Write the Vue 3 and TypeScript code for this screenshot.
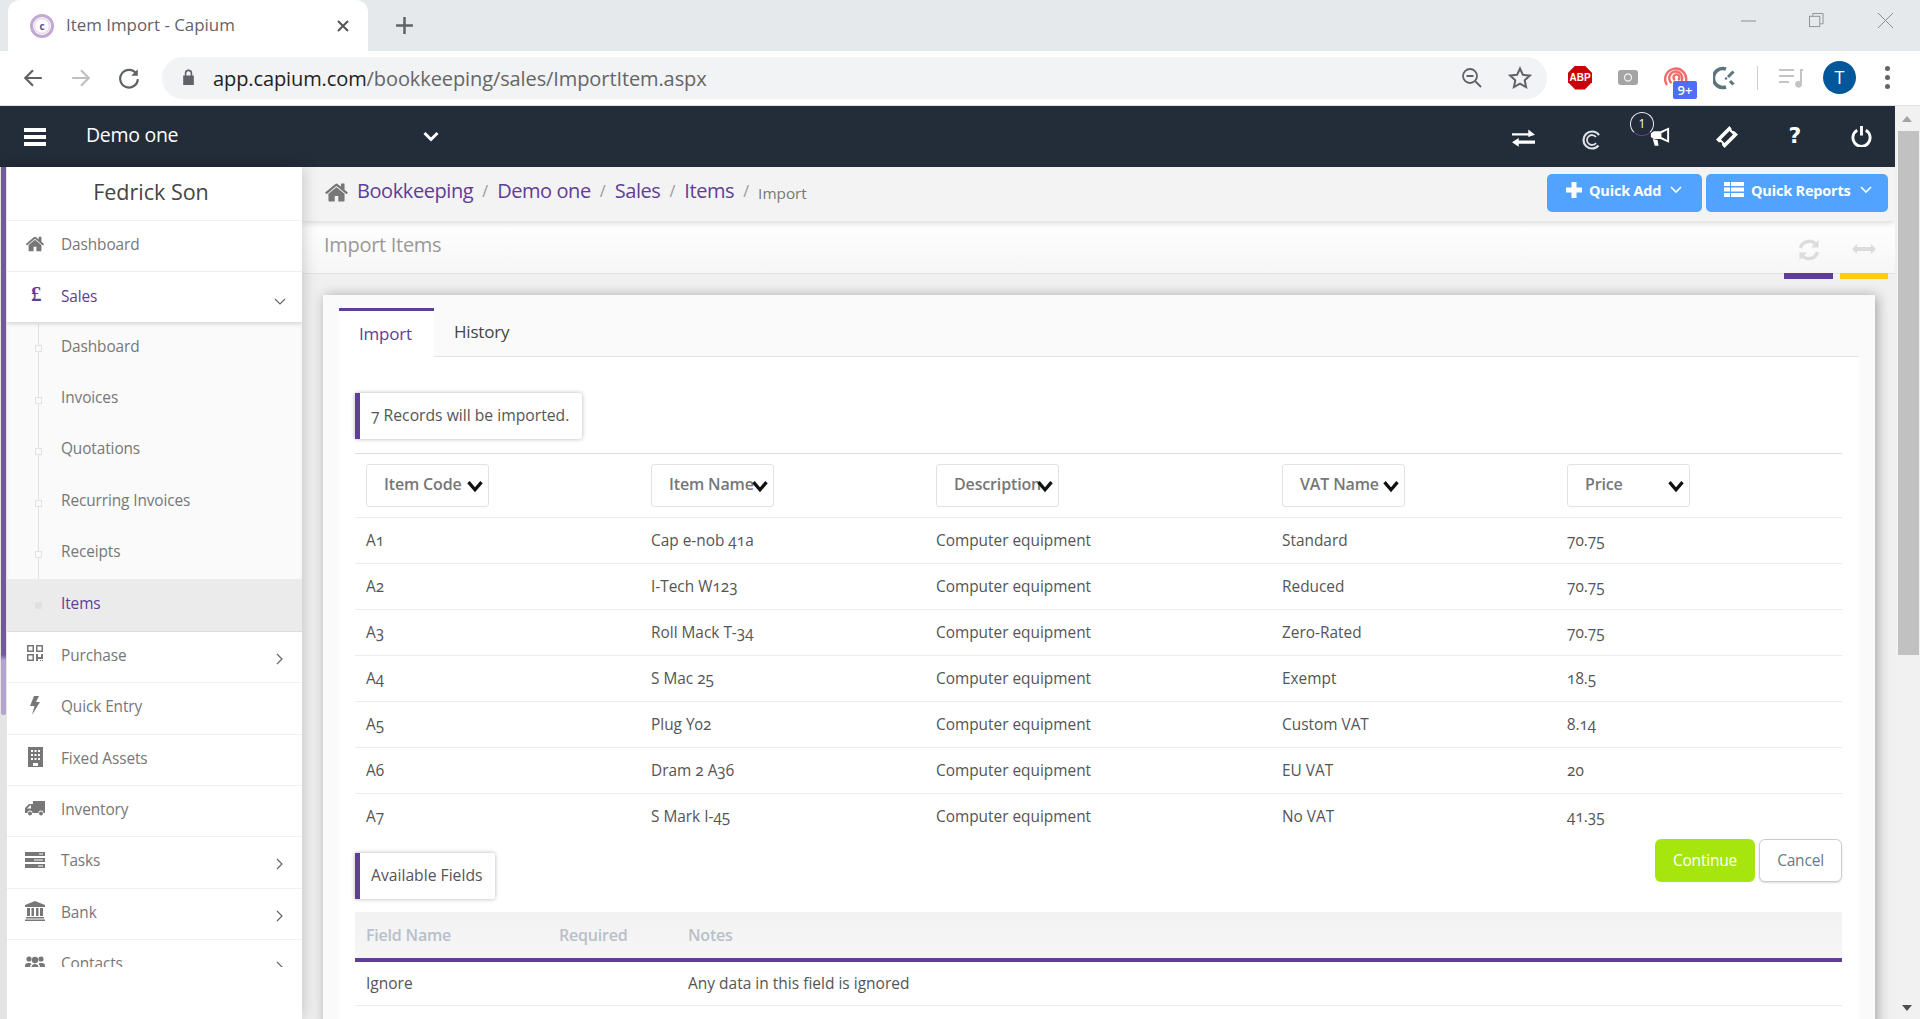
<script setup lang="ts">
interface NavItem { label: string; icon: string; arrow?: boolean }
const topItems: NavItem[] = [
  { label: 'Purchase', icon: 'qr', arrow: true },
  { label: 'Quick Entry', icon: 'bolt' },
  { label: 'Fixed Assets', icon: 'building' },
  { label: 'Inventory', icon: 'truck' },
  { label: 'Tasks', icon: 'tasks', arrow: true },
  { label: 'Bank', icon: 'bank', arrow: true },
  { label: 'Contacts', icon: 'users', arrow: true }
]
const subItems = ['Dashboard', 'Invoices', 'Quotations', 'Recurring Invoices', 'Receipts']
const crumbs = ['Bookkeeping', 'Demo one', 'Sales', 'Items']
const columns = ['Item Code', 'Item Name', 'Description', 'VAT Name', 'Price']
const rows = [
  ['A1', 'Cap e-nob 41a', 'Computer equipment', 'Standard', '70.75'],
  ['A2', 'I-Tech W123', 'Computer equipment', 'Reduced', '70.75'],
  ['A3', 'Roll Mack T-34', 'Computer equipment', 'Zero-Rated', '70.75'],
  ['A4', 'S Mac 25', 'Computer equipment', 'Exempt', '18.5'],
  ['A5', 'Plug Y02', 'Computer equipment', 'Custom VAT', '8.14'],
  ['A6', 'Dram 2 A36', 'Computer equipment', 'EU VAT', '20'],
  ['A7', 'S Mark I-45', 'Computer equipment', 'No VAT', '41.35']
]
const homePath = 'M1472 992v480q0 26-19 45t-45 19h-384v-384h-256v384h-384q-26 0-45-19t-19-45v-480q0-1 .5-3t.5-3l575-474 575 474q1 2 1 6zm223-69l-62 74q-8 9-21 11h-3q-13 0-21-7l-692-577-692 577q-12 8-24 7-13-2-21-11l-62-74q-8-10-7-23.500t11-21.500l719-599q32-26 76-26t76 26l244 204v-195q0-14 9-23t23-9h192q14 0 23 9t9 23v408l219 182q10 8 11 21.500t-7 23.500z'
</script>

<template>
  <div class="page">
    <div class="tabstrip">
      <div class="tab">
        <svg class="favicon" viewBox="0 0 24 24" fill="none">
          <circle cx="12" cy="12" r="10.500" stroke="#c3a8d3" stroke-width="3" />
          <circle cx="12" cy="12" r="7.500" stroke="#e6dcec" stroke-width="1.500" />
          <text x="12" y="15.500" text-anchor="middle" font-size="10" font-weight="700" fill="#6a4a90" font-family="Open Sans">c</text>
        </svg>
        <span class="tab-title">Item Import - Capium</span>
        <svg class="tab-x" viewBox="0 0 14 14"><path d="M2 2l10 10M12 2L2 12" stroke="#555" stroke-width="2" /></svg>
      </div>
      <svg class="tab-plus" viewBox="0 0 18 18"><path d="M9 1v16M1 9h16" stroke="#5f6368" stroke-width="2.400" /></svg>
      <div class="win">
        <svg class="win-min" viewBox="0 0 15 2"><path d="M0 1h15" stroke="#8a8f94" /></svg>
        <svg class="win-res" viewBox="0 0 16 16" fill="none" stroke="#8a8f94"><rect x=".5" y="3.500" width="11" height="11" /><path d="M4 3V.5h11v11h-3" /></svg>
        <svg class="win-x" viewBox="0 0 15 15"><path d="M0 0l15 15M15 0L0 15" stroke="#8a8f94" /></svg>
      </div>
    </div>

    <div class="toolbar">
      <svg class="nav-ic first" viewBox="0 0 20 20" fill="none" stroke="#5f6368" stroke-width="2"><path d="M18 10H3M10 3l-7 7 7 7" /></svg>
      <svg class="nav-ic" viewBox="0 0 20 20" fill="none" stroke="#bdc1c6" stroke-width="2"><path d="M2 10h15M10 3l7 7-7 7" /></svg>
      <svg class="nav-ic" viewBox="0 0 20 20" fill="none" stroke="#5f6368" stroke-width="2"><path d="M16.500 6A8 8 0 1 0 18 11" /><path d="M18 2v6h-6" fill="#5f6368" stroke="none" /></svg>
      <div class="omnibox">
        <svg class="lock" viewBox="0 0 12 16"><path d="M1 6h1.500V4a3.500 3.500 0 0 1 7 0v2H11v9H1zM4 6h4V4a2 2 0 0 0-4 0z" fill="#5f6368" /></svg>
        <span class="url"><b>app.capium.com</b>/bookkeeping/sales/ImportItem.aspx</span>
        <svg class="omni-zoom" viewBox="0 0 20 20" fill="none" stroke="#5f6368" stroke-width="1.800"><circle cx="8" cy="8" r="7" /><path d="M4.500 8h7M13 13l6 6" /></svg>
        <svg class="omni-star" viewBox="0 0 24 24" fill="none" stroke="#5f6368" stroke-width="2"><path d="M12 2.500l2.900 6.300 6.900.8-5.100 4.700 1.400 6.800-6.100-3.400-6.100 3.400 1.400-6.800L2.200 9.600l6.900-.8z" /></svg>
      </div>
      <div class="abp"><span>ABP</span></div>
      <svg class="ext-cam" viewBox="0 0 20 15"><rect width="20" height="15" rx="3" fill="#a4a4a4" /><circle cx="10" cy="7.500" r="3.500" fill="none" stroke="#eee" stroke-width="1.300" /></svg>
      <div class="ext-red">
        <svg viewBox="0 0 24 24" fill="none" stroke="#f36a6a" stroke-width="2.400"><path d="M3 19A10.500 10.500 0 1 1 22 15" /><path d="M7.500 17a6.500 6.500 0 1 1 10-2" /><path d="M11 14a3 3 0 1 1 3 0" /></svg>
        <span class="ext-badge">9+</span>
      </div>
      <svg class="ext-clock" viewBox="0 0 22 24" fill="none" stroke="#5c7480" stroke-width="3.600"><path d="M13 3A9.500 9.500 0 1 0 13 21" /><path d="M20.500 5.500L15 11M20.500 18.500L17 15" stroke-width="3" /><circle cx="13" cy="12.500" r="1.300" fill="#5c7480" stroke="none" /></svg>
      <div class="tool-div"></div>
      <svg class="ext-music" viewBox="0 0 24 20"><path d="M0 2h15M0 8h15M0 14h10" stroke="#c4c4c4" stroke-width="2.200" /><path d="M21 1h3v2h-1v13a3.500 3.500 0 1 1-2-3z" fill="#c4c4c4" /></svg>
      <div class="avatar">T</div>
      <div class="dots"><i></i><i></i><i></i></div>
    </div>

    <div class="viewport">
      <div class="app">
        <header class="topbar">
          <div class="burger"><i></i><i></i><i></i></div>
          <span class="company">Demo one</span>
          <svg class="company-chev" viewBox="0 0 16 11" fill="none" stroke="#fff" stroke-width="3"><path d="M1.500 2l6.500 6.500L14.500 2" /></svg>
          <div class="top-icons">
            <svg class="ti-swap" viewBox="0 0 24 18" fill="#fff"><path d="M0 4h17V0l7 5.500L17 8V6.500H0zM24 11.500H7V9L0 13.500 7 18v-3h17z" /></svg>
            <svg class="ti-c" viewBox="0 0 20 20" fill="none" stroke="#dfe3e6"><circle cx="11" cy="10" r="8.500" stroke-width="2.200" stroke-dasharray="42 12" stroke-dashoffset="-6" /><path d="M15 13a5 5 0 1 1 0-6" stroke-width="1.800" /></svg>
            <div class="ti-horn">
              <svg viewBox="0 0 24 20" fill="#fff"><path d="M22 0v16l-9-4H6L3 10V6l3-2h7zM20 3l-6 3v4l6 3zM5 12l5 1 1 6H7z" fill-rule="evenodd" /></svg>
              <span class="ti-count">1</span>
            </div>
            <svg class="ti-ticket" viewBox="0 0 22 22" fill="#fff"><path d="M13.500 0l2 2.500a2 2 0 0 0 2.500 2.500l4 3.500L8.500 22l-2.500-3a2 2 0 0 0-3-2.500L0 13.500zM13.500 5L5 13.500l3.500 3.500 8.500-8.500z" fill-rule="evenodd" /></svg>
            <span class="ti-help">?</span>
            <svg class="ti-power" viewBox="0 0 22 22" fill="none" stroke="#fff" stroke-width="3"><path d="M6.500 4.500a9 9 0 1 0 9 0" /><path d="M11 0v10" /></svg>
          </div>
        </header>

        <div class="body">
          <aside class="sidebar">
            <div class="user">Fedrick Son</div>
            <nav class="menu">
              <div class="item">
                <svg class="ic ic-home" viewBox="0 0 1792 1792"><path :d="homePath" fill="#777" /></svg>
                <span>Dashboard</span>
              </div>
              <div class="item open">
                <span class="pound">£</span>
                <span>Sales</span>
                <svg class="chev chev-down" viewBox="0 0 12 8" fill="none" stroke="#666" stroke-width="1.200"><path d="M1 1l5 5 5-5" /></svg>
              </div>
              <div class="subs">
                <div v-for="s in subItems" :key="s" class="sub"><i class="node"></i><span>{{ s }}</span></div>
                <div class="sub current"><i class="node"></i><span>Items</span></div>
              </div>
              <div v-for="it in topItems" :key="it.label" class="item">
                <svg class="ic" viewBox="0 0 20 20" fill="#777">
                  <template v-if="it.icon === 'qr'">
                    <path fill-rule="evenodd" d="M2 1h7v7H2zM3.500 2.500v4h4v-4zM11 1h7v7h-7zM12.500 2.500v4h4v-4zM2 10h7v7H2zM3.500 11.500v4h4v-4zM11 10h2v3h3v-3h2v5h-5v2h-2zM15 16h1v1h-1zM17 16h1v1h-1z" />
                  </template>
                  <path v-else-if="it.icon === 'bolt'" d="M9 0h5l-3 6h4L7 19l2.500-9H5z" />
                  <template v-else-if="it.icon === 'building'">
                    <path fill-rule="evenodd" d="M3 0h15v20H3zM6 3v2h2V3zM9.500 3v2h2V3zM13 3v2h2V3zM6 7v2h2V7zM9.500 7v2h2V7zM13 7v2h2V7zM6 11v2h2v-2zM9.500 11v2h2v-2zM13 11v2h2v-2zM8 16v3h5v-3z" />
                  </template>
                  <path v-else-if="it.icon === 'truck'" fill-rule="evenodd" d="M8 2h12v12h-1.500a2.500 2.500 0 0 0-5 0H7.500a2.500 2.500 0 0 0-5 0H0V9l4-4h4zM5 6.500L2 9.500h4v-3zM5 12.500a2 2 0 1 1 0 4 2 2 0 0 1 0-4zM16 12.500a2 2 0 1 1 0 4 2 2 0 0 1 0-4z" />
                  <template v-else-if="it.icon === 'tasks'">
                    <path fill-rule="evenodd" d="M0 2h20v4H0zM14 3.500v1h4v-1zM0 8h20v4H0zM9 9.500v1h9v-1zM0 14h20v4H0zM13 15.500v1h5v-1z" />
                  </template>
                  <path v-else-if="it.icon === 'bank'" fill-rule="evenodd" d="M10 0l10 4v2H0V4zM2 7h3v8H2zM6.500 7h2.500v8H6.500zM11 7h2.500v8H11zM15 7h3v8h-3zM1 16h18v1.500H1zM0 18.500h20V20H0z" />
                  <template v-else>
                    <circle cx="4" cy="6" r="2.600" /><circle cx="16" cy="6" r="2.600" /><circle cx="10" cy="7" r="3.200" />
                    <path d="M0 13q0-3 3-3h2q1 0 1.500 1Q5 12 5 14H0zM20 13q0-3-3-3h-2q-1 0-1.500 1 1.500 1 1.500 3h5zM6 17q0-6 4-6t4 6z" />
                  </template>
                </svg>
                <span>{{ it.label }}</span>
                <svg v-if="it.arrow" class="chev chev-right" viewBox="0 0 8 12" fill="none" stroke="#666" stroke-width="1.200"><path d="M1 1l5 5-5 5" /></svg>
              </div>
            </nav>
            <div class="rail"></div>
          </aside>

          <main class="content">
            <div class="crumbbar">
              <svg class="crumb-home" viewBox="0 0 1792 1792"><path :d="homePath" fill="#777" /></svg>
              <template v-for="c in crumbs" :key="c">
                <a class="crumb">{{ c }}</a><span class="slash">/</span>
              </template>
              <span class="crumb-now">Import</span>
              <div class="quick">
                <button class="qbtn q-add">
                  <svg viewBox="0 0 16 16" class="q-plus"><path d="M8 0v16M0 8h16" stroke="#fff" stroke-width="5" /></svg>
                  Quick Add
                  <svg viewBox="0 0 12 8" class="q-chev" fill="none" stroke="#fff" stroke-width="1.600"><path d="M1 1l5 5 5-5" /></svg>
                </button>
                <button class="qbtn q-rep">
                  <svg viewBox="0 0 20 15" class="q-table" fill="#fff"><path d="M0 0h6v4H0zM7 0h13v4H7zM0 5.500h6v4H0zM7 5.500h13v4H7zM0 11h6v4H0zM7 11h13v4H7z" /></svg>
                  Quick Reports
                  <svg viewBox="0 0 12 8" class="q-chev" fill="none" stroke="#fff" stroke-width="1.600"><path d="M1 1l5 5 5-5" /></svg>
                </button>
              </div>
            </div>

            <div class="titlebar">
              <h1>Import Items</h1>
              <div class="tool purple">
                <svg viewBox="0 0 22 22" fill="none" stroke="#dcdcdc" stroke-width="3.400"><path d="M2.500 9a9 9 0 0 1 15.500-3.500M19.500 13a9 9 0 0 1-15.500 3.500" /><path d="M20.500 1v7.500H13M1.500 21v-7.500H9" fill="#dcdcdc" stroke="none" /></svg>
              </div>
              <div class="tool yellow">
                <svg viewBox="0 0 24 10" fill="#dcdcdc"><path d="M0 5l5-5v3h14V0l5 5-5 5V7H5v3z" /></svg>
              </div>
            </div>

            <section class="card">
              <div class="tabs">
                <div class="t active">Import</div>
                <div class="t">History</div>
              </div>
              <div class="panel">
                <div class="callout">7 Records will be imported.</div>
                <table class="grid">
                  <colgroup><col class="c1" /><col class="c1" /><col class="c3" /><col class="c1" /><col /></colgroup>
                  <thead>
                    <tr>
                      <th v-for="c in columns" :key="c">
                        <div class="sel">{{ c }}
                          <svg viewBox="0 0 14 12" fill="none" stroke="#111" stroke-width="3"><path d="M1 2l6 7 6-7" /></svg>
                        </div>
                      </th>
                    </tr>
                  </thead>
                  <tbody>
                    <tr v-for="r in rows" :key="r[0]">
                      <td v-for="(v, i) in r" :key="i">{{ v }}</td>
                    </tr>
                  </tbody>
                </table>
                <div class="actions">
                  <div class="callout second">Available Fields</div>
                  <div class="btns">
                    <button class="go">Continue</button>
                    <button class="no">Cancel</button>
                  </div>
                </div>
                <table class="fields">
                  <thead>
                    <tr><th class="f1">Field Name</th><th class="f2">Required</th><th>Notes</th></tr>
                  </thead>
                  <tbody>
                    <tr><td>Ignore</td><td></td><td>Any data in this field is ignored</td></tr>
                  </tbody>
                </table>
              </div>
            </section>
          </main>
        </div>
      </div>

      <div class="scrollbar">
        <i class="sb-up"></i>
        <div class="thumb"></div>
        <i class="sb-down"></i>
      </div>
    </div>
  </div>
</template>

<style>
html, body { margin: 0; overflow: hidden; }
</style>

<style scoped>
.page { height: 1019px; width: 1920px; overflow: hidden; display: flex; flex-direction: column; font-family: "Open Sans", "Noto Sans", sans-serif; background: #fff; }
button { font-family: inherit; }

.tabstrip { height: 51px; background: #e6e9ec; display: flex; align-items: center; flex: none; }
.tab { width: 360px; height: 51px; margin-left: 8px; background: #fff; border-radius: 12px 12px 0 0; display: flex; align-items: center; box-sizing: border-box; padding-left: 22px; }
.favicon { width: 24px; height: 24px; }
.tab-title { margin-left: 12px; font-size: 16.900px; color: #5f6368; width: 270px; white-space: nowrap; margin-top: -2px; }
.tab-x { width: 14px; height: 14px; }
.tab-plus { width: 19px; height: 19px; margin-left: 27px; }
.win { margin-left: auto; display: flex; align-items: center; padding-right: 27px; }
.win-min { width: 15px; height: 2px; margin-top: -10px; }
.win-res { width: 15px; height: 15px; margin-left: 53px; margin-top: -10px; }
.win-x { width: 15px; height: 15px; margin-left: 54px; margin-top: -10px; }

.toolbar { height: 55px; flex: none; display: flex; align-items: center; box-sizing: border-box; border-bottom: 1px solid #dfe1e5; padding-bottom: 1px; }
.nav-ic { width: 22px; height: 22px; margin-left: 26px; }
.nav-ic.first { margin-left: 22px; }
.omnibox { width: 1385px; height: 42px; margin-left: 22px; border-radius: 21px; background: #f1f3f4; display: flex; align-items: center; }
.lock { width: 13px; height: 17px; margin-left: 20px; }
.url { margin-left: 18px; font-size: 20px; color: #666; white-space: nowrap; letter-spacing: -0.100px; padding-top: 1px; }
.url b { font-weight: 400; color: #222; }
.omni-zoom { width: 20px; height: 20px; margin-left: auto; }
.omni-star { width: 24px; height: 24px; margin-left: 26px; margin-right: 15px; }
.abp { width: 24px; height: 24px; margin-left: 21px; background: #c8040a; clip-path: polygon(30% 0, 70% 0, 100% 30%, 100% 70%, 70% 100%, 30% 100%, 0 70%, 0 30%); display: flex; align-items: center; justify-content: center; }
.abp span { color: #fff; font: 700 10px "Liberation Sans", sans-serif; }
.ext-cam { width: 20px; height: 15px; margin-left: 26px; }
.ext-red { width: 24px; height: 24px; margin-left: 26px; position: relative; }
.ext-red svg { width: 24px; height: 24px; display: block; }
.ext-badge { position: absolute; left: 9px; top: 15px; width: 24px; height: 18px; background: #4f6df5; color: #fff; border-radius: 2px; font-size: 13px; font-weight: 600; text-align: center; line-height: 18px; }
.ext-clock { width: 22px; height: 24px; margin-left: 25px; }
.tool-div { width: 1px; height: 24px; background: #d0d0d0; margin-left: 22px; }
.ext-music { width: 24px; height: 20px; margin-left: 21px; }
.avatar { width: 33px; height: 33px; margin-left: 20px; border-radius: 50%; background: #01579b; color: #fff; font-size: 18px; text-align: center; line-height: 33px; }
.dots { margin-left: 29px; display: flex; flex-direction: column; gap: 4px; }
.dots i { width: 5px; height: 5px; border-radius: 50%; background: #5f6368; display: block; }

.viewport { flex: 1; display: flex; min-height: 0; }
.app { width: 1895px; display: flex; flex-direction: column; min-height: 0; }
.topbar { height: 61px; flex: none; background: #232c39; display: flex; align-items: center; color: #fff; }
.burger { margin-left: 24px; width: 22px; display: flex; flex-direction: column; gap: 3px; }
.burger i { display: block; height: 4px; background: #fff; }
.company { margin-left: 40px; font-size: 19.500px; width: 337px; letter-spacing: -0.300px; margin-top: -5px; }
.company-chev { width: 16px; height: 11px; margin-top: 0; }
.top-icons { margin-left: auto; display: flex; align-items: center; padding-right: 23px; }
.ti-swap { width: 23px; height: 18px; margin-top: 3px; }
.ti-c { width: 20px; height: 20px; margin-left: 46px; margin-top: 6px; }
.ti-horn { width: 23px; height: 20px; margin-left: 47px; position: relative; }
.ti-horn svg { width: 23px; height: 20px; display: block; }
.ti-count { position: absolute; left: -18px; top: -15px; width: 24px; height: 24px; border-radius: 50%; border: 1px solid #e8e8f0; border-bottom-color: #6a3fa0; background: #232c39; font-size: 12px; text-align: center; line-height: 22px; box-sizing: border-box; }
.ti-ticket { width: 22px; height: 22px; margin-left: 45px; }
.ti-help { width: 14px; margin-left: 50px; font: 700 22px "DejaVu Sans", sans-serif; text-align: center; margin-top: -2px; }
.ti-power { width: 21px; height: 21px; margin-left: 49px; }

.body { flex: 1; display: flex; min-height: 0; }
.sidebar { width: 302px; flex: none; box-sizing: border-box; padding-left: 7px; background: #e4e4e4; position: relative; z-index: 3; box-shadow: 0 0 16px rgba(0, 0, 0, 0.22); display: flex; flex-direction: column; }
.user { height: 54px; flex: none; box-sizing: border-box; background: #fff; border-bottom: 1px solid #f1f1f1; font-size: 21.500px; color: #444; text-align: center; line-height: 50px; padding-right: 7px; }
.menu { height: 746px; flex: none; overflow: hidden; background: #fff; }
.rail { flex: 1; background: #fff; }
.rail::before { content: ""; position: absolute; left: 1px; top: 0; width: 5px; height: 548px; background: linear-gradient(#7257a5, #7257a5 89%, #b3a3cf 90%, #b3a3cf); border-radius: 0 0 3px 3px; }
.item { height: 51.400px; box-sizing: border-box; border-bottom: 1px solid #f1f1f1; background: #fff; display: flex; align-items: center; font-size: 15.400px; color: #777; padding-bottom: 3px; position: relative; letter-spacing: -0.100px; }
.item > span:not(.pound) { position: absolute; left: 54px; }
.ic { width: 20px; height: 20px; margin-left: 18px; margin-bottom: 2px; }
.open { height: 50px; color: #5f3d99; box-shadow: 0 2px 4px rgba(0, 0, 0, 0.15); z-index: 1; border-bottom: 0; padding-bottom: 2px; }
.pound { font: 700 21px "Liberation Serif", serif; color: #5f3d99; margin-left: 24px; margin-bottom: 3px; }
.chev { position: absolute; }
.chev-down { left: 267px; top: 26px; width: 12px; height: 8px; }
.chev-right { left: 269px; top: 21px; width: 8px; height: 12px; }
.subs { background: #fafafa; position: relative; box-shadow: inset 0 -3px 4px -2px rgba(0, 0, 0, 0.15); border-bottom: 1px solid #ddd; }
.subs::before { content: ""; position: absolute; left: 31px; top: 2px; bottom: 20px; width: 1px; background: #e2e2e2; }
.sub { height: 51.400px; display: flex; align-items: center; font-size: 15.400px; color: #777; padding-left: 54px; padding-bottom: 4px; box-sizing: border-box; position: relative; letter-spacing: -0.100px; }
.node { position: absolute; left: 28px; top: 23px; width: 7px; height: 7px; background: #fafafa; border: 1px solid #e2e2e2; box-sizing: border-box; }
.current { background: #ebebeb; color: #5f3d99; }
.current .node { background: #e0e0e0; }
.current::before { content: ""; position: absolute; left: -6px; top: 0; bottom: 0; width: 6px; background: #5f3d99; }

.content { flex: 1; min-width: 0; background: #f0f0f0; display: flex; flex-direction: column; overflow: hidden; }
.crumbbar { height: 54px; flex: none; box-sizing: border-box; background: #f3f3f3; display: flex; align-items: center; padding-left: 22px; box-shadow: 0 2px 6px rgba(0, 0, 0, 0.15); position: relative; z-index: 2; }
.crumb-home { width: 25px; height: 25px; margin-right: 8px; margin-top: -3px; }
.crumb { font-size: 20px; color: #5f3d99; letter-spacing: -0.420px; margin-top: -8px; }
.slash { color: #999; font-size: 16px; margin: -6px 9px 0 9px; }
.crumb-now { font-size: 15.300px; color: #777; margin-top: -3px; }
.quick { margin-left: auto; display: flex; gap: 4px; padding-right: 7px; margin-top: -3px; }
.qbtn { height: 38px; border: 0; border-radius: 5px; background: #52a3ff; color: #fff; font-size: 14.500px; font-weight: 700; display: flex; align-items: center; padding: 0 0 4px; white-space: nowrap; letter-spacing: -0.200px; }
.q-add { width: 155px; padding-left: 19px; }
.q-rep { width: 182px; padding-left: 18px; }
.q-plus { width: 16px; height: 16px; margin-right: 7px; margin-top: -1px; }
.q-table { width: 20px; height: 15px; margin-right: 7px; margin-top: -2px; }
.q-chev { width: 12px; height: 8px; margin-left: 9px; margin-top: -1px; }

.titlebar { height: 53px; flex: none; box-sizing: border-box; background: linear-gradient(#fff, #f6f6f6); border-bottom: 1px solid #e4e4e4; display: flex; padding: 0 7px 0 22px; }
.titlebar h1 { margin: 0 auto 0 0; font-size: 20px; font-weight: 400; color: #999; line-height: 47px; letter-spacing: -0.300px; }
.tool { height: 58px; display: flex; justify-content: center; align-items: flex-start; padding-top: 18px; box-sizing: border-box; border-bottom: 6px solid; }
.tool svg { width: 22px; height: 22px; }
.purple { width: 49px; border-color: #5f3d99; }
.yellow { width: 48px; margin-left: 7px; border-color: #ffcc0d; }
.yellow svg { width: 24px; height: 10px; margin-top: 5px; }

.card { margin: 21px 20px 0 21px; background: #fafafa; padding: 13px 16px 0; box-shadow: 2px 1px 12px rgba(0, 0, 0, 0.33); flex: none; }
.tabs { height: 49px; display: flex; border-bottom: 1px solid #e6e6e6; box-sizing: border-box; }
.t { padding: 0 0 0 20px; font-size: 17px; color: #444; line-height: 47px; letter-spacing: -0.200px; }
.t.active { width: 95px; height: 49px; box-sizing: border-box; background: #fff; color: #5f3d99; border-top: 3px solid #5f3d99; padding: 0 0 0 20px; line-height: 46px; }
.panel { background: #fff; padding: 36px 17px 0 16px; height: 700px; }
.callout { display: inline-block; height: 46px; box-sizing: border-box; border-left: 5px solid #5f3d99; border-radius: 0 3px 3px 0; box-shadow: 0 0 4px rgba(0, 0, 0, 0.3); padding: 0 13px 0 11px; line-height: 44px; font-size: 15.700px; color: #555; font-variant-numeric: oldstyle-nums; vertical-align: top; }
.grid { margin-top: 14px; width: 1487px; table-layout: fixed; border-collapse: collapse; border-top: 1px solid #ddd; }
.c1 { width: 285px; }
.c3 { width: 346px; }
.grid th { height: 64px; box-sizing: border-box; padding: 0 0 0 11px; text-align: left; border-bottom: 1px solid #e8edf2; }
.sel { width: 123px; height: 43px; box-sizing: border-box; border: 1px solid #e2e2e2; border-radius: 3px; padding-left: 17px; font-size: 16px; font-weight: 600; color: #777; line-height: 39px; position: relative; white-space: nowrap; letter-spacing: -0.150px; }
.sel svg { position: absolute; right: 5px; top: 15px; width: 16px; height: 13px; }
.grid td { height: 46px; box-sizing: border-box; padding: 0 0 0 11px; font-size: 15.400px; color: #555; border-bottom: 1px solid #e8edf2; font-variant-numeric: oldstyle-nums; }
.grid tr:last-child td { border-bottom: 0; }
.actions { display: flex; justify-content: space-between; align-items: flex-start; margin-top: -1px; height: 73px; }
.second { margin-top: 14px; }
.btns { display: flex; gap: 4px; }
.go, .no { height: 43px; border-radius: 6px; font-size: 15.500px; letter-spacing: -0.200px; padding: 0; }
.go { width: 100px; background: #a6e60e; color: #fff; border: 0; }
.no { width: 83px; background: #fff; color: #667c8c; border: 1px solid #ccc; box-shadow: 0 1px 2px rgba(0, 0, 0, 0.15); }
.fields { margin-top: 0; width: 1487px; border-collapse: collapse; table-layout: fixed; }
.fields .f1 { width: 204px; }
.fields .f2 { width: 129px; }
.fields th { height: 48px; box-sizing: border-box; text-align: left; padding: 0 0 0 11px; font-size: 16px; font-weight: 600; color: #b8c0c9; background: linear-gradient(#f2f2f2, #f6f6f6); border-bottom: 4px solid #5f3d99; letter-spacing: -0.200px; }
.fields th:nth-child(n+2), .fields td:nth-child(n+2) { padding-left: 0; }
.fields td { height: 46px; box-sizing: border-box; padding: 0 0 0 11px; font-size: 15.500px; color: #555; border-bottom: 1px solid #e8edf2; }

.scrollbar { width: 25px; flex: none; background: #f1f1f1; display: flex; flex-direction: column; align-items: center; box-sizing: border-box; padding-left: 2px; position: relative; }
.thumb { width: 21px; height: 524px; background: #c1c1c1; margin-top: 25px; }
.sb-up { position: absolute; top: 10px; left: 7px; border: 5.500px solid transparent; border-top: 0; border-bottom: 6px solid #a3a3a3; }
.sb-down { position: absolute; bottom: 8px; left: 7px; border: 5.500px solid transparent; border-bottom: 0; border-top: 6px solid #505050; }
</style>
